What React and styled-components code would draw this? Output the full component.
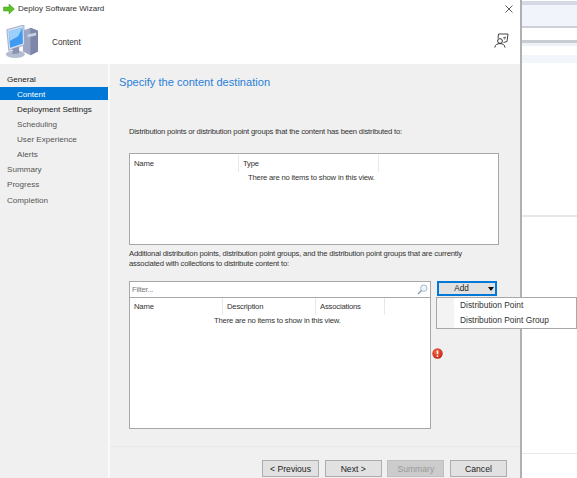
import React from 'react';
import styled, { createGlobalStyle } from 'styled-components';

const Global = createGlobalStyle`
  html, body { margin: 0; padding: 0; height: 100%; overflow: hidden; background: #fff; }
  #root { height: 478px; }
  * { box-sizing: border-box; }
`;

const Desktop = styled.div`
  display: flex;
  width: 577px;
  height: 478px;
  overflow: hidden;
  font-family: "Liberation Sans", Arial, sans-serif;
  font-size: 8.6px;
  color: #222;
`;
const Wizard = styled.div`
  display: flex;
  flex-direction: column;
  width: 522px;
  flex-shrink: 0;
  border-right: 2px solid #b0b0b0;
  background: #fff;
`;
const TitleBar = styled.div`
  display: flex;
  align-items: center;
  height: 17px;
  padding: 0 7px 0 3px;
  flex-shrink: 0;
  font-size: 8.05px;
  color: #333;
`;
const TitleText = styled.span`
  margin-left: 3px;
  flex: 1;
`;
const Banner = styled.div`
  display: flex;
  align-items: center;
  height: 47px;
  padding: 3px 11px 0 4px;
  flex-shrink: 0;
`;
const BannerTitle = styled.span`
  margin-left: 13px;
  flex: 1;
  font-size: 8.2px;
  color: #333;
`;
const PersonSlot = styled.div`
  display: flex;
  margin-bottom: 4px;
`;
const Body = styled.div`
  display: flex;
  flex: 1;
  min-height: 0;
`;
const Sidebar = styled.nav`
  width: 110px;
  flex-shrink: 0;
  padding-top: 6.5px;
  background: #f0f0f0;
  border-right: 2px solid #fafafa;
`;
const NavItem = styled.div`
  height: 15.15px;
  line-height: 15px;
  padding-left: ${p => (p.$sub ? 17 : 7)}px;
  white-space: nowrap;
  font-size: 8.1px;
  border-top: 1px solid transparent;
  border-bottom: 1px solid transparent;
  background-clip: padding-box;
  background-color: ${p => (p.$active ? '#0078d7' : 'transparent')};
  color: ${p => (p.$active ? '#fff' : p.$strong ? '#222' : '#555')};
`;
const Main = styled.main`
  display: flex;
  flex-direction: column;
  flex: 1;
  min-width: 0;
  background: #f0f0f0;
`;
const Content = styled.div`
  height: 383px;
  padding: 11px 22px 0 9px;
  border-bottom: 1px solid #e8e8e8;
  flex-shrink: 0;
`;
const Heading = styled.h1`
  margin: 0;
  height: 16px;
  font-size: 11.1px;
  line-height: 14px;
  font-weight: 400;
  color: #2a7fd6;
`;
const Label = styled.p`
  margin: ${p => p.$top}px 0 ${p => p.$bottom || 0}px 10px;
  height: ${p => p.$height}px;
  font-size: 7.7px;
  letter-spacing: -0.2px;
  line-height: 10px;
  color: #333;
`;
const ListBox = styled.div`
  margin-left: 10px;
  height: ${p => p.$height}px;
  width: ${p => p.$width}px;
  padding-top: ${p => p.$pad || 0}px;
  background: #fff;
  border: 1px solid #a8a8a8;
`;
const ColumnRow = styled.div`
  display: flex;
  height: 17px;
`;
const ColumnHead = styled.div`
  width: ${p => p.$width}px;
  padding-left: 4px;
  line-height: 17px;
  font-size: 7.7px;
  letter-spacing: -0.2px;
  border-right: 1px solid #e8e8e8;
  color: #333;
`;
const Empty = styled.div`
  padding-left: ${p => p.$left}px;
  line-height: 12px;
  font-size: 7.7px;
  letter-spacing: -0.2px;
  color: #333;
`;
const LowerRow = styled.div`
  display: flex;
  margin-top: 12px;
`;
const LowerList = styled.div`
  display: flex;
  flex-direction: column;
  width: 312px;
  flex-shrink: 0;
`;
const FilterBox = styled.div`
  display: flex;
  align-items: center;
  justify-content: space-between;
  margin-left: 10px;
  width: 302px;
  height: 16px;
  padding: 0 2px;
  background: #fff;
  border: 1px solid #a8a8a8;
  border-bottom: 0;
  font-size: 7.7px;
  letter-spacing: -0.2px;
  color: #777;
`;
const Side = styled.div`
  position: relative;
  margin-left: 5px;
  width: 62px;
`;
const AddButton = styled.button`
  display: flex;
  align-items: center;
  width: 60px;
  height: 15px;
  margin-left: 1px;
  padding: 0 1px 0 0;
  background: #e1e1e1;
  border: 2px solid #0078d7;
  font: inherit;
  font-size: 8.2px;
  color: #222;
`;
const AddLabel = styled.span`
  flex: 1;
  padding-right: 4px;
  text-align: center;
`;
const Caret = styled.span`
  width: 0;
  height: 0;
  border-left: 3.5px solid transparent;
  border-right: 3.5px solid transparent;
  border-top: 4px solid #111;
`;
const Menu = styled.div`
  position: absolute;
  left: 0;
  top: 16px;
  width: 141px;
  height: 32px;
  background: linear-gradient(to right, #f3f3f3 17px, #fff 17px);
  border: 1px solid #a8a8a8;
  z-index: 2;
`;
const MenuItem = styled.div`
  height: 15px;
  line-height: 15px;
  padding-left: 23px;
  font-size: 8.4px;
  color: #333;
  white-space: nowrap;
`;
const Alert = styled.svg`
  display: block;
  margin: 52px 0 0 -4px;
`;
const Footer = styled.div`
  display: flex;
  justify-content: flex-end;
  gap: 5.67px;
  flex: 1;
  padding: 13px 13px 0 0;
`;
const WizButton = styled.button`
  width: 57px;
  height: 17px;
  padding: 0;
  border: 1px solid ${p => (p.disabled ? '#bfbfbf' : '#adadad')};
  font: inherit;
  color: ${p => (p.disabled ? '#9a9a9a' : '#222')};
  background: ${p => (p.disabled ? '#cccccc' : '#e1e1e1')};
`;
const Backdrop = styled.div`
  display: flex;
  flex-direction: column;
  flex: 1;
  background: #fff;
`;
const Stripe = styled.div`
  height: ${p => p.$h}px;
  flex-shrink: 0;
  background: ${p => p.$c};
`;

const NextArrow = () => (
  <svg width="12" height="12" viewBox="0 0 12 12">
    <path d="M0.5 4 H6 V1 L11.5 6 L6 11 V8 H0.5 Z" fill="#5cc02c" stroke="#3f9a1e" strokeWidth="0.5" />
  </svg>
);

const Close = () => (
  <svg width="8" height="8" viewBox="0 0 8 8">
    <path d="M0.5 0.5 L7.5 7.5 M7.5 0.5 L0.5 7.5" stroke="#333" strokeWidth="0.8" fill="none" />
  </svg>
);

const ComputerIcon = () => (
  <svg width="35" height="34" viewBox="0 0 35 36">
    <path d="M19 6 L27 3 L35 6 V28 L27 32 L19 28 Z" fill="#9ca6c4" />
    <path d="M27 3 L35 6 V28 L27 32 Z" fill="#7c86a8" />
    <path d="M24 10 L33 8 V11 L24 13 Z" fill="#c7cfe2" />
    <path d="M2 5 L20 0 L21 21 L4 27 Z" fill="#d5def0" stroke="#8c9abc" strokeWidth="0.8" />
    <path d="M4 7 L18.5 3 L19 19.5 L5.5 24 Z" fill="#3f9bf2" />
    <path d="M4 7 L18.5 3 L14 12 L5 17 Z" fill="#9bd0fa" />
    <ellipse cx="11" cy="31" rx="10" ry="4" fill="#b4bcd0" />
    <path d="M8 25 L15 23 L15 30 L8 31 Z" fill="#8a94ae" />
  </svg>
);

const PersonIcon = () => (
  <svg width="15" height="15" viewBox="0 0 15 15">
    <path d="M4 5.5 L4.5 1 H14 L13 8.5 L9.5 9.5" fill="none" stroke="#444" strokeWidth="1" />
    <path d="M9 5 L11.5 4 L10.5 6.5" fill="none" stroke="#444" strokeWidth="0.8" />
    <circle cx="6" cy="8" r="2.4" fill="#fff" stroke="#333" strokeWidth="1" />
    <path d="M0.8 14.5 C1.2 11.5 3.5 10.6 6 10.6 C8.5 10.6 10.6 11.5 11 14.5" fill="none" stroke="#333" strokeWidth="1" />
  </svg>
);

const SearchIcon = () => (
  <svg width="11" height="11" viewBox="0 0 11 11">
    <circle cx="6.8" cy="4.2" r="3.2" fill="#eef5fb" stroke="#a3bbcd" strokeWidth="1" />
    <path d="M4.5 6.5 L1 10" stroke="#8d9eac" strokeWidth="1.5" />
  </svg>
);

const ErrorIcon = () => (
  <Alert width="11" height="11" viewBox="0 0 11 11">
    <defs>
      <radialGradient id="alertFill" cx="0.4" cy="0.35" r="0.7">
        <stop offset="0" stopColor="#f2694a" />
        <stop offset="1" stopColor="#c4200f" />
      </radialGradient>
    </defs>
    <circle cx="5.5" cy="5.5" r="5.2" fill="url(#alertFill)" />
    <path d="M5.5 2.5 V6.2" stroke="#fff" strokeWidth="1.6" />
    <circle cx="5.5" cy="8.1" r="0.9" fill="#fff" />
  </Alert>
);

const nav = [
  { label: 'General', strong: true },
  { label: 'Content', sub: true, active: true },
  { label: 'Deployment Settings', sub: true, strong: true },
  { label: 'Scheduling', sub: true },
  { label: 'User Experience', sub: true },
  { label: 'Alerts', sub: true },
  { label: 'Summary' },
  { label: 'Progress' },
  { label: 'Completion' },
];

const stripes = [
  { h: 1, c: '#ffffff' }, { h: 4, c: '#d5d9e4' }, { h: 21, c: '#f1f5fb' }, { h: 2, c: '#cdd0d6' }, { h: 12, c: '#ffffff' },
  { h: 3, c: '#c9ccd2' }, { h: 3, c: '#eef1f6' }, { h: 9, c: '#ffffff' }, { h: 8, c: '#f2f5f9' },
  { h: 152, c: '#ffffff' }, { h: 2, c: '#e6e6ea' }, { h: 236, c: '#ffffff' }, { h: 1, c: '#e8e8ec' },
];

export default function App() {
  return (
    <>
      <Global />
      <Desktop>
        <Wizard>
          <TitleBar>
            <NextArrow />
            <TitleText>Deploy Software Wizard</TitleText>
            <Close />
          </TitleBar>
          <Banner>
            <ComputerIcon />
            <BannerTitle>Content</BannerTitle>
            <PersonSlot>
              <PersonIcon />
            </PersonSlot>
          </Banner>
          <Body>
            <Sidebar>
              {nav.map(n => (
                <NavItem key={n.label} $sub={n.sub} $active={n.active} $strong={n.strong}>
                  {n.label}
                </NavItem>
              ))}
            </Sidebar>
            <Main>
              <Content>
                <Heading>Specify the content destination</Heading>
                <Label $top={36} $height={10} $bottom={16}>
                  Distribution points or distribution point groups that the content has been distributed to:
                </Label>
                <ListBox $height={92} $width={370} $pad={1}>
                  <ColumnRow>
                    <ColumnHead $width={109}>Name</ColumnHead>
                    <ColumnHead $width={140}>Type</ColumnHead>
                  </ColumnRow>
                  <Empty $left={118}>There are no items to show in this view.</Empty>
                </ListBox>
                <Label $top={4} $height={20}>
                  Additional distribution points, distribution point groups, and the distribution point groups that are currently associated with collections to distribute content to:
                </Label>
                <LowerRow>
                  <LowerList>
                    <FilterBox>
                      Filter...
                      <SearchIcon />
                    </FilterBox>
                    <ListBox $height={132} $width={302}>
                      <ColumnRow>
                        <ColumnHead $width={93}>Name</ColumnHead>
                        <ColumnHead $width={93}>Description</ColumnHead>
                        <ColumnHead $width={69}>Associations</ColumnHead>
                      </ColumnRow>
                      <Empty $left={84}>There are no items to show in this view.</Empty>
                    </ListBox>
                  </LowerList>
                  <Side>
                    <AddButton>
                      <AddLabel>Add</AddLabel>
                      <Caret />
                    </AddButton>
                    <Menu>
                      <MenuItem>Distribution Point</MenuItem>
                      <MenuItem>Distribution Point Group</MenuItem>
                    </Menu>
                    <ErrorIcon />
                  </Side>
                </LowerRow>
              </Content>
              <Footer>
                <WizButton>&lt; Previous</WizButton>
                <WizButton>Next &gt;</WizButton>
                <WizButton disabled>Summary</WizButton>
                <WizButton>Cancel</WizButton>
              </Footer>
            </Main>
          </Body>
        </Wizard>
        <Backdrop>
          {stripes.map((s, i) => (
            <Stripe key={i} $h={s.h} $c={s.c} />
          ))}
        </Backdrop>
      </Desktop>
    </>
  );
}
